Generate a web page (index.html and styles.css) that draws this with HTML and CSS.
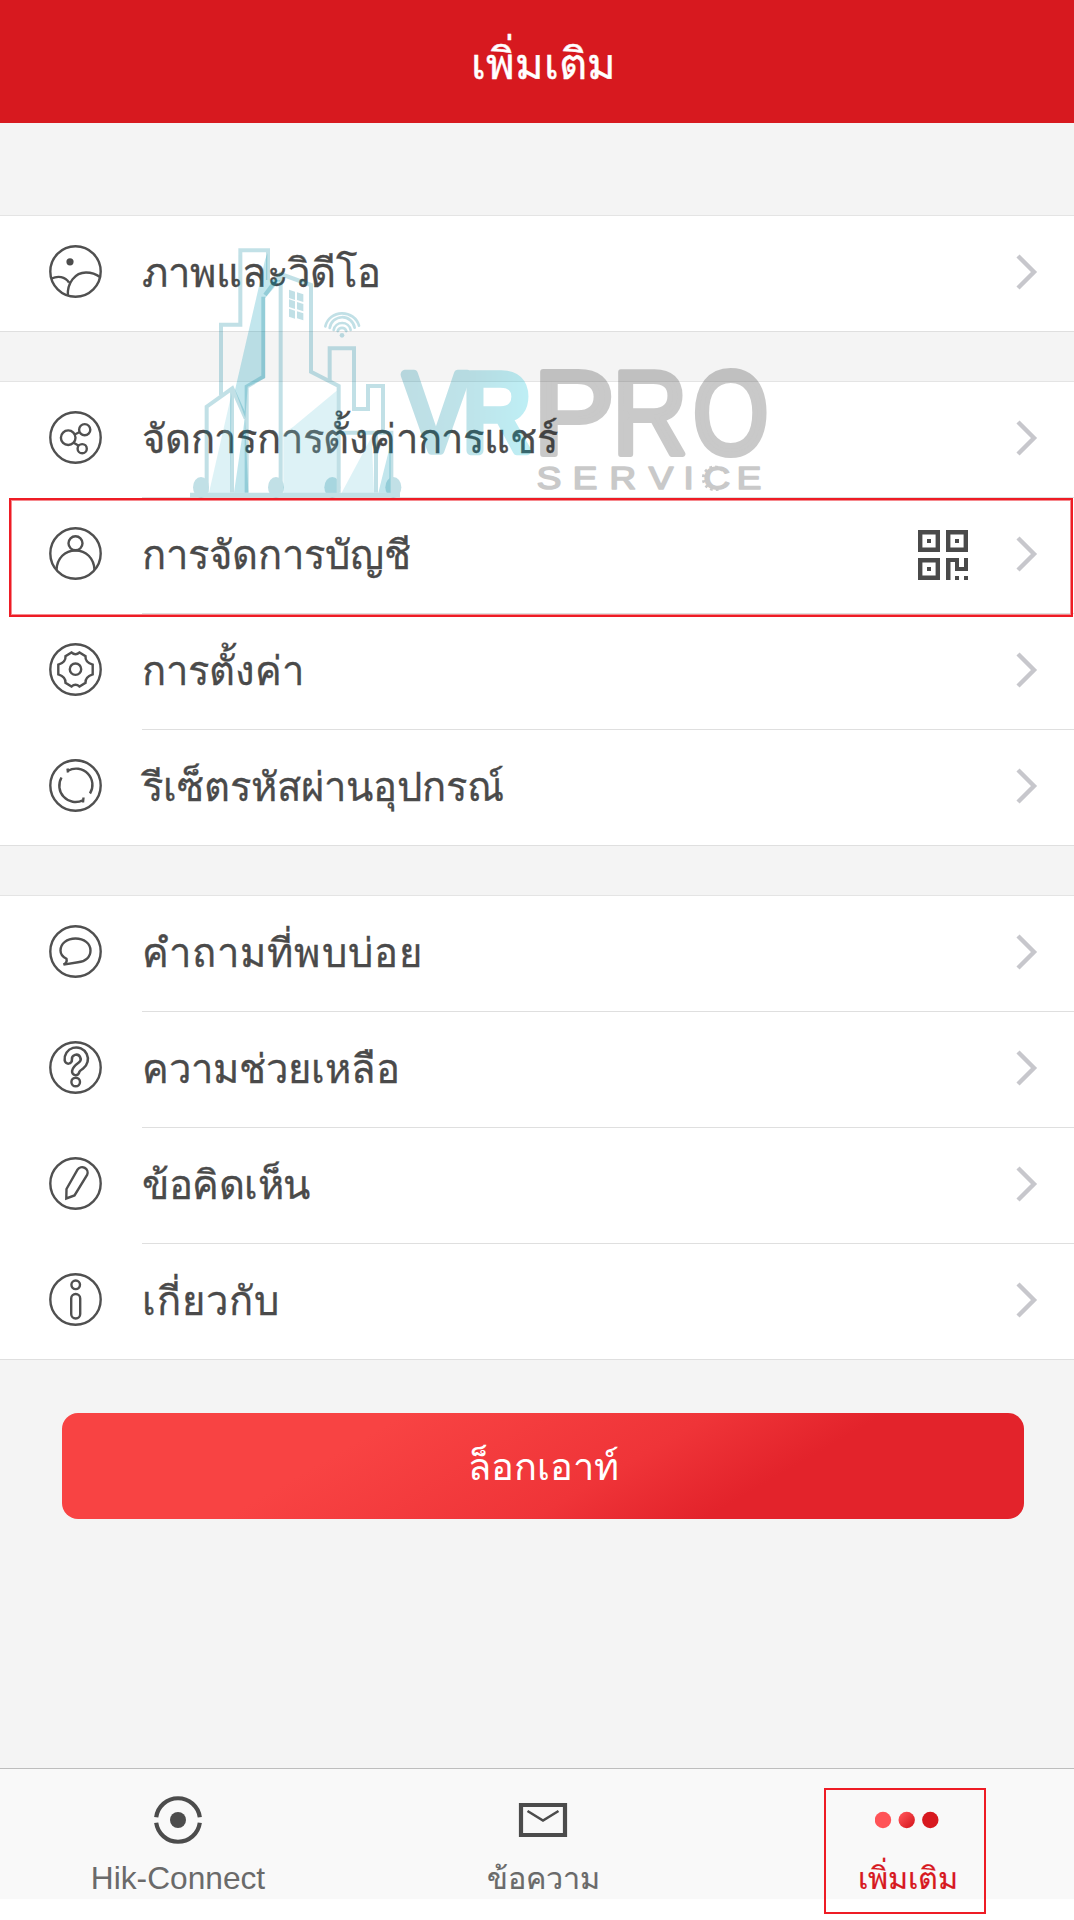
FILE: index.html
```html
<!DOCTYPE html>
<html lang="th">
<head>
    <meta charset="UTF-8">
    <meta name="viewport" content="width=device-width, initial-scale=1.0">
    <title>เพิ่มเติม</title>
    <link rel="stylesheet" href="styles.css">
</head>
<body>
    <header class="header">เพิ่มเติม</header>

    <main class="content">
        <ul class="group">
            <li class="row">
                <svg class="icon" viewBox="0 0 53 53"><circle cx="26.5" cy="26.5" r="25.2"/><circle class="solid" cx="21" cy="16.8" r="3.6"/><path d="M2.5 33.5C9 30.5 16 31.5 20 37.5M18.8 51C18 38 26 27.5 37 27.5c6 0 10 1.5 14 4.5"/></svg>
                <span class="label">ภาพและวิดีโอ</span>
                <svg class="chevron" viewBox="0 0 22 36"><path d="M2 2l16 16L2 34"/></svg>
            </li>
        </ul>

        <ul class="group">
            <li class="row">
                <svg class="icon" viewBox="0 0 53 53"><circle cx="26.5" cy="26.5" r="25.2"/><circle cx="19.2" cy="26.7" r="7.3"/><circle cx="35.7" cy="18.7" r="5.6"/><circle cx="33.2" cy="37.7" r="4.6"/><path d="M25.7 23.5l5-2.5M24.7 31.7l5 3"/></svg>
                <span class="label snug">จัดการการตั้งค่าการแชร์</span>
                <svg class="chevron" viewBox="0 0 22 36"><path d="M2 2l16 16L2 34"/></svg>
            </li>
            <li class="row highlighted">
                <svg class="icon" viewBox="0 0 53 53"><circle cx="26.5" cy="26.5" r="25.2"/><circle cx="26.5" cy="16.3" r="7"/><path d="M7.5 43C8 31 16 23.5 26.5 23.5S45 31 45.5 43"/></svg>
                <span class="label">การจัดการบัญชี</span>
                <svg class="qr" viewBox="0 0 50 50">
                    <path class="qr-frame" d="M2.2 2.2h17.6v17.6H2.2zM30.2 2.2h17.6v17.6H30.2zM2.2 30.2h17.6v17.6H2.2z"/>
                    <path d="M9 9h4v4H9zM37 9h4v4h-4zM9 37h4v4H9zM28 28h13v9h5v-9h4v13H37v-9h-4.5v18H28zM37 46h4v4h-4zM46 46h4v4h-4z"/>
                </svg>
                <svg class="chevron" viewBox="0 0 22 36"><path d="M2 2l16 16L2 34"/></svg>
            </li>
            <li class="row">
                <svg class="icon" viewBox="0 0 53 53"><circle cx="26.5" cy="26.5" r="25.2"/><circle cx="26.5" cy="26.2" r="5.7"/><path d="M22.5 9.5q4 3.4 8 0l6 3.6q-.6 6 7.2 8.6v9.6q-7.800 2.600-7.200 8.600l-6 3.600q-4-3.400-8 0l-6-3.600q.6-6-7.200-8.600v-9.600q7.800-2.600 7.200-8.600z"/></svg>
                <span class="label">การตั้งค่า</span>
                <svg class="chevron" viewBox="0 0 22 36"><path d="M2 2l16 16L2 34"/></svg>
            </li>
            <li class="row">
                <svg class="icon" viewBox="0 0 53 53"><circle cx="26.5" cy="26.5" r="25.2"/><path d="M19 11.8A16.3 16.3 0 0 1 41 34.5M12.5 18.5A16.3 16.3 0 0 0 33.8 41.3M18.5 9.5l.5 4M34.500 38.500l-.5 5"/></svg>
                <span class="label">รีเซ็ตรหัสผ่านอุปกรณ์</span>
                <svg class="chevron" viewBox="0 0 22 36"><path d="M2 2l16 16L2 34"/></svg>
            </li>
        </ul>

        <ul class="group">
            <li class="row">
                <svg class="icon" viewBox="0 0 53 53"><circle cx="26.5" cy="26.5" r="25.2"/><path d="M14.5 39.6q4-2.3 3-5.8C13.5 31.8 11.5 29 11.5 25.5 11.5 18.5 18 13.5 26.5 13.5S41.5 18.5 41.5 25.5C41.5 32 36.5 36.5 29 37.3z"/></svg>
                <span class="label loose">คำถามที่พบบ่อย</span>
                <svg class="chevron" viewBox="0 0 22 36"><path d="M2 2l16 16L2 34"/></svg>
            </li>
            <li class="row">
                <svg class="icon" viewBox="0 0 53 53"><circle cx="26.5" cy="26.5" r="25.2"/><path class="tube" d="M19.3 19a8 8 0 1 1 12.700 5.500c-3.500 2.500-5 3.800-5.300 6"/><path class="tube-inner" d="M19.3 19a8 8 0 1 1 12.700 5.500c-3.500 2.500-5 3.800-5.300 6"/><circle cx="26.7" cy="41" r="4.3"/></svg>
                <span class="label">ความช่วยเหลือ</span>
                <svg class="chevron" viewBox="0 0 22 36"><path d="M2 2l16 16L2 34"/></svg>
            </li>
            <li class="row">
                <svg class="icon" viewBox="0 0 53 53"><circle cx="26.5" cy="26.5" r="25.2"/><path d="M17.3 41.5l.2-9.500 11-19.300a5.500 5.500 0 0 1 9.600 5.300L25.500 38.500z"/></svg>
                <span class="label tight">ข้อคิดเห็น</span>
                <svg class="chevron" viewBox="0 0 22 36"><path d="M2 2l16 16L2 34"/></svg>
            </li>
            <li class="row">
                <svg class="icon" viewBox="0 0 53 53"><circle cx="26.5" cy="26.5" r="25.2"/><circle cx="26.7" cy="11.8" r="4.3"/><rect x="22.2" y="21" width="9" height="24.5" rx="4.5"/></svg>
                <span class="label loose">เกี่ยวกับ</span>
                <svg class="chevron" viewBox="0 0 22 36"><path d="M2 2l16 16L2 34"/></svg>
            </li>
        </ul>

        <button class="logout">ล็อกเอาท์</button>
    </main>

    <nav class="tabbar">
        <a class="tab">
            <svg class="tab-icon" viewBox="0 0 52 52"><circle class="solid" cx="26" cy="26" r="8"/><path class="thick" d="M4.2 23.3a22 22 0 0 1 43.6 0M4.2 28.7a22 22 0 0 0 43.6 0"/></svg>
            <span>Hik-Connect</span>
        </a>
        <a class="tab">
            <svg class="tab-icon" viewBox="0 0 52 52"><path class="thick" d="M4 11h44v30H4z"/><path class="thin" d="M10.5 17L26 26.5 41.5 17"/></svg>
            <span class="thai">ข้อความ</span>
        </a>
        <a class="tab active">
            <svg class="tab-icon dots" viewBox="0 0 66 52">
                <defs>
                    <linearGradient id="dotFade" x1="0" y1="0" x2="1" y2="1">
                        <stop offset="0.1" stop-color="#ff5357"/>
                        <stop offset="0.9" stop-color="#d7191f"/>
                    </linearGradient>
                </defs>
                <circle cx="8" cy="26" r="8.2" fill="#ff5357"/>
                <circle cx="31.7" cy="26" r="8.2" fill="url(#dotFade)"/>
                <circle cx="55.3" cy="26" r="8.2" fill="#d7191f"/>
            </svg>
            <span class="thai">เพิ่มเติม</span>
        </a>
    </nav>

    <!-- watermark over the list -->
    <svg class="skyline" viewBox="0 0 690 810">
        <g class="panes">
            <path d="M155 490L150 788H87zM310 610L340 590 470 482V788H310zM575 620L582 788H485z"/>
        </g>
        <g class="slabs">
            <path d="M262 70L255 90 165 480 196 565 203 470 255 445V205L302 150 262 150zM195 560L162 788H205zM632 640V788H595z"/>
        </g>
        <g class="lines">
            <path d="M123 495V284H181V61H264V150M255 195L302 132 393 165V425L476 468V788M302 140V788M200 788V470L250 440V200"/>
            <path d="M80 788V530L157 475 197 565M156 480V788M449 450V355H522V537H564V468H609V605M480 608H634V788M588 612V788"/>
            <path class="filled" d="M327 179l18 6v25l-18-6zM351 187l19 6v23l-19-6zM327 208l18 6v23l-18-6zM351 216l19 6v22l-19-6zM327 236l18 6v24l-18-6zM351 244l19 6v21l-19-6z"/>
            <path class="wifi" d="M436 292a52 50 0 0 1 101-2M449 297a38 38 0 0 1 75-1M461 303a26 26 0 0 1 51 0M473 306a14 15 0 0 1 26 0" transform="translate(0 -3)"/>
            <circle class="filled" cx="486" cy="316" r="7"/>
            <g class="filled">
                <ellipse cx="63" cy="772" rx="24" ry="31"/>
                <ellipse cx="288" cy="772" rx="24" ry="31"/>
                <ellipse cx="457" cy="772" rx="24" ry="31"/>
                <ellipse cx="640" cy="772" rx="24" ry="31"/>
                <path d="M30 788h630v14H30z"/>
            </g>
        </g>
    </svg>
    <svg class="wordmark" viewBox="0 0 1170 450">
        <defs>
            <linearGradient id="vrFade" gradientUnits="userSpaceOnUse" x1="40" y1="0" x2="430" y2="0">
                <stop offset="0" stop-color="#00809a"/>
                <stop offset="0.5" stop-color="#0094ac"/>
                <stop offset="1" stop-color="#00c4dc"/>
            </linearGradient>
        </defs>
        <g class="vr">
            <text x="43" y="301" textLength="190" lengthAdjust="spacingAndGlyphs">V</text>
            <text x="218" y="301" textLength="206" lengthAdjust="spacingAndGlyphs">R</text>
        </g>
        <g class="pro">
            <text x="430" y="312" textLength="244" lengthAdjust="spacingAndGlyphs">P</text>
            <text x="667" y="312" textLength="226" lengthAdjust="spacingAndGlyphs">R</text>
            <text x="908" y="312" textLength="228" lengthAdjust="spacingAndGlyphs">O</text>
        </g>
        <g class="service">
            <text y="416" transform="scale(1.2 1)" x="367 457 549 647 734 784 867">SERVICE</text>
            <path class="teeth" d="M998 361A34 34 0 1 0 998 409"/>
        </g>
    </svg>
</body>
</html>
```
FILE: styles.css
```css
*, *::before, *::after {
    box-sizing: border-box;
}
body {
    margin: 0;
    position: relative;
    display: flex;
    flex-direction: column;
    width: 1074px;
    height: 1920px;
    overflow: hidden;
    background-color: #fff;
    color: #4a4a4a;
    font-family: "Liberation Sans", Arial, sans-serif;
}
.header {
    height: 123px;
    padding: 8px 0 0 13px;
    line-height: 113px;
    text-align: center;
    font-size: 43.5px;
    color: #fff;
    background-color: #d7191f;
    -webkit-text-stroke: 0.4px;
}
.content {
    flex: 1;
    padding-top: 92px;
    background-color: #f4f4f4;
}
.group {
    list-style: none;
    margin: 0 0 49px;
    padding: 0;
    background-color: #fff;
    border-top: 1px solid #e4e4e4;
}
.row {
    position: relative;
    display: flex;
    align-items: center;
    height: 116px;
    padding: 0 36px 0 49px;
}
.row::after {
    content: "";
    position: absolute;
    left: 142px;
    right: 0;
    bottom: 0;
    height: 1px;
    background-color: #dfdfdf;
}
.row:last-child::after {
    left: 0;
}
.icon {
    width: 53px;
    height: 53px;
    margin: 0 40px 5px 0;
    fill: none;
    stroke: #505050;
    stroke-width: 2.4;
}
.solid {
    fill: #4c4c4c;
    stroke: none;
}
.icon .tube {
    stroke-width: 9.8;
    stroke-linecap: round;
}
.icon .tube-inner {
    stroke: #fff;
    stroke-width: 4.8;
    stroke-linecap: round;
}
.label {
    flex: 1;
    margin-bottom: 2px;
    font-size: 40px;
    line-height: 60px;
    -webkit-text-stroke: 0.3px;
}
.label.loose {
    letter-spacing: 1.1px;
}
.label.snug {
    letter-spacing: -0.2px;
}
.label.tight {
    letter-spacing: -0.5px;
}
.qr {
    width: 50px;
    height: 50px;
    margin: 0 48px 2px 0;
    fill: #4a4a4a;
}
.qr-frame {
    fill: none;
    stroke: #4a4a4a;
    stroke-width: 4.4;
}
.chevron {
    width: 22px;
    height: 36px;
    margin-bottom: 4px;
    fill: none;
    stroke: #c7c7cc;
    stroke-width: 4.4;
}
.highlighted::before {
    content: "";
    position: absolute;
    z-index: 1;
    top: 0;
    left: 9px;
    right: 1px;
    height: 119px;
    border: 2px solid #ee1c25;
    box-shadow: inset 0 0 0 1px #f58a8f;
}
.logout {
    display: block;
    width: 962px;
    height: 106px;
    margin: 53px 0 0 62px;
    padding: 0;
    border: none;
    border-radius: 16px;
    font-family: inherit;
    font-size: 38px;
    color: #fff;
    background: linear-gradient(150deg, #f84343 30%, #ef3438 57%, #e3232b 72%);
}
/* three equal tabs centred on the same axis as the title */
.tabbar {
    display: grid;
    grid-template-columns: repeat(3, 365px);
    height: 131px;
    margin-bottom: 21px;
    padding-top: 25px;
    background-color: #f9f9f9;
    border-top: 1px solid #bdbdbd;
}
.tab {
    position: relative;
    display: flex;
    flex-direction: column;
    align-items: center;
    margin-left: -9px;
    font-size: 31.7px;
    line-height: 40px;
    color: #6a6a6a;
}
.tab .thai {
    font-size: 30.5px;
    -webkit-text-stroke: 0.2px;
}
.tab-icon {
    width: 52px;
    height: 52px;
    margin-bottom: 12px;
}
.tab-icon.dots {
    width: 66px;
}
.thick {
    fill: none;
    stroke: #4c4c4c;
    stroke-width: 4.2;
}
.thin {
    fill: none;
    stroke: #4c4c4c;
    stroke-width: 2.6;
}
.tab.active {
    color: #d7191f;
}
.tab.active::after {
    content: "";
    position: absolute;
    top: -6px;
    left: 103px;
    width: 162px;
    height: 126px;
    border: 2px solid #ee1c25;
}
.skyline {
    position: absolute;
    left: 180px;
    top: 230px;
    width: 230px;
    height: 270px;
}
.panes {
    fill: #77cbdc;
    opacity: 0.25;
}
.slabs {
    fill: #0096b4;
    opacity: 0.24;
}
.lines {
    fill: none;
    stroke: #00809a;
    stroke-width: 12;
    opacity: 0.24;
}
.filled {
    fill: #00809a;
    stroke: none;
}
.wifi {
    stroke-width: 8;
    stroke-linecap: round;
}
.wordmark {
    position: absolute;
    left: 390px;
    top: 350px;
    width: 390px;
    height: 150px;
    overflow: visible;
}
.vr, .pro, .service {
    stroke-linejoin: round;
    opacity: 0.25;
}
.vr {
    font-size: 328px;
    fill: url(#vrFade);
    stroke: url(#vrFade);
    stroke-width: 28;
}
.pro {
    font-size: 356px;
    fill: #2b2b2b;
    stroke: #2b2b2b;
    stroke-width: 18;
}
.service {
    font-size: 92px;
    fill: #2b2b2b;
    stroke: #2b2b2b;
    stroke-width: 5;
}
.teeth {
    fill: none;
    stroke-width: 9;
    stroke-dasharray: 8 9;
}
```
